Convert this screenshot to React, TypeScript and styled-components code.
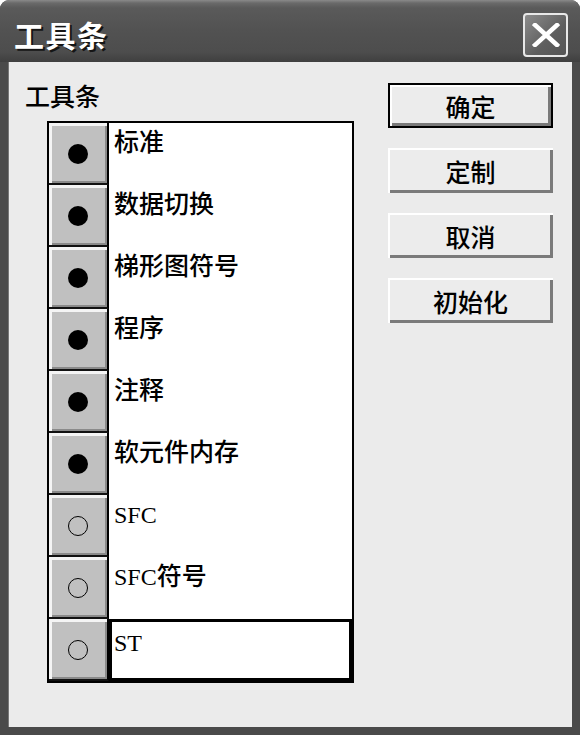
import styled, { createGlobalStyle } from "styled-components";

const Global = createGlobalStyle`
  html, body { margin: 0; padding: 0; background: #ffffff; }
  body { font-family: "Noto Sans CJK SC", sans-serif; }
  * { box-sizing: border-box; }
`;

const Frame = styled.div`
  width: 580px;
  height: 735px;
  display: flex;
  flex-direction: column;
  background: #4a4a4a;
  border-radius: 9px 9px 0 0;
  overflow: hidden;
`;

const TitleBar = styled.div`
  height: 62px;
  flex: none;
  display: flex;
  align-items: center;
  justify-content: space-between;
  padding: 0 12px 0 14px;
  background: linear-gradient(
    to bottom,
    #8a8a8a 0px,
    #6a6a6a 3px,
    #5a5a5a 8px,
    #525252 30px,
    #4d4d4d 52px,
    #3f3f3f 62px
  );
`;

const Title = styled.div`
  font-family: "Noto Sans CJK SC", sans-serif;
  font-size: 30px;
  font-weight: 700;
  color: #ffffff;
  text-shadow: 2px 2px 0 #151515;
  letter-spacing: 1.5px;
  margin-top: 6px;
`;

const CloseBtn = styled.div`
  width: 45px;
  height: 44px;
  margin-top: 8px;
  border: 2px solid #e8e8e8;
  border-radius: 4px;
  background: linear-gradient(135deg, #8c8c8c, #5e5e5e 60%, #555555);
  display: flex;
  align-items: center;
  justify-content: center;
`;

const Client = styled.div`
  flex: 1;
  margin: 0 8px 8px;
  background: #ebebeb;
  border-left: 1px solid #777777;
  display: grid;
  grid-template-columns: 379px 165px;
  align-items: start;
`;

const LeftCol = styled.div`
  padding: 18px 0 0 16px;
  display: flex;
  flex-direction: column;
`;

const Label = styled.div`
  font-size: 25px;
  font-weight: 500;
  line-height: 30px;
  color: #000;
`;

const ListBox = styled.div`
  margin: 11px 0 0 22px;
  width: 307px;
  border: 2px solid #000;
  background: #ffffff;
  display: flex;
  flex-direction: column;
`;

const Row = styled.div`
  height: 62px;
  display: grid;
  grid-template-columns: 60px 1fr;
`;

const RadioCell = styled.div`
  background: #c0c0c0;
  border-right: 2px solid #000;
  border-bottom: 2px solid #111;
  box-shadow: inset 3px 3px 0 #f4f4f4, inset -2px -2px 0 #8a8a8a;
  display: flex;
  align-items: center;
  justify-content: center;
  padding-top: 1px;
`;

const Dot = styled.span<{ $on: boolean }>`
  width: 20px;
  height: 20px;
  border-radius: 50%;
  background: ${({ $on }) => ($on ? "#000" : "transparent")};
  border: ${({ $on }) => ($on ? "none" : "1.5px solid #000")};
`;

const TextCell = styled.div<{ $selected: boolean }>`
  font-family: "Noto Sans CJK SC", sans-serif;
  font-size: 25px;
  font-weight: 500;
  line-height: 28px;
  color: #000;
  padding: ${({ $selected }) => ($selected ? "4px 0 0 2px" : "3px 0 0 5px")};
  border: ${({ $selected }) => ($selected ? "3px solid #000" : "none")};
`;

const Latin = styled.span`
  font-family: "Liberation Serif", serif;
  font-size: 24px;
  font-weight: 400;
`;

const RightCol = styled.div`
  padding-top: 21px;
  display: flex;
  flex-direction: column;
  gap: 20px;
`;

const Button = styled.div<{ $default?: boolean }>`
  height: 45px;
  display: flex;
  align-items: center;
  justify-content: center;
  background: #ececec;
  font-size: 25px;
  font-weight: 500;
  color: #000;
  border: ${({ $default }) => ($default ? "2px solid #000" : "none")};
  box-shadow: inset 2px 2px 0 #ffffff, inset -3px -3px 0 #7a7a7a;
`;

const items = [
  { name: "标准", on: true },
  { name: "数据切换", on: true },
  { name: "梯形图符号", on: true },
  { name: "程序", on: true },
  { name: "注释", on: true },
  { name: "软元件内存", on: true },
  { name: "SFC", on: false },
  { name: "SFC符号", on: false },
  { name: "ST", on: false },
];

function renderName(name: string) {
  return name
    .split(/([A-Za-z]+)/)
    .filter(Boolean)
    .map((part, i) =>
      /^[A-Za-z]+$/.test(part) ? <Latin key={i}>{part}</Latin> : <span key={i}>{part}</span>
    );
}

export default function App() {
  return (
    <>
      <Global />
      <Frame>
        <TitleBar>
          <Title>工具条</Title>
          <CloseBtn>
            <svg width="28" height="24" viewBox="0 0 28 24">
              <path d="M3 2 L25 22 M25 2 L3 22" stroke="#fff" strokeWidth="4.5" strokeLinecap="square" />
            </svg>
          </CloseBtn>
        </TitleBar>
        <Client>
          <LeftCol>
            <Label>工具条</Label>
            <ListBox>
              {items.map((it, i) => (
                <Row key={it.name}>
                  <RadioCell>
                    <Dot $on={it.on} />
                  </RadioCell>
                  <TextCell $selected={i === items.length - 1}>{renderName(it.name)}</TextCell>
                </Row>
              ))}
            </ListBox>
          </LeftCol>
          <RightCol>
            <Button $default>确定</Button>
            <Button>定制</Button>
            <Button>取消</Button>
            <Button>初始化</Button>
          </RightCol>
        </Client>
      </Frame>
    </>
  );
}
